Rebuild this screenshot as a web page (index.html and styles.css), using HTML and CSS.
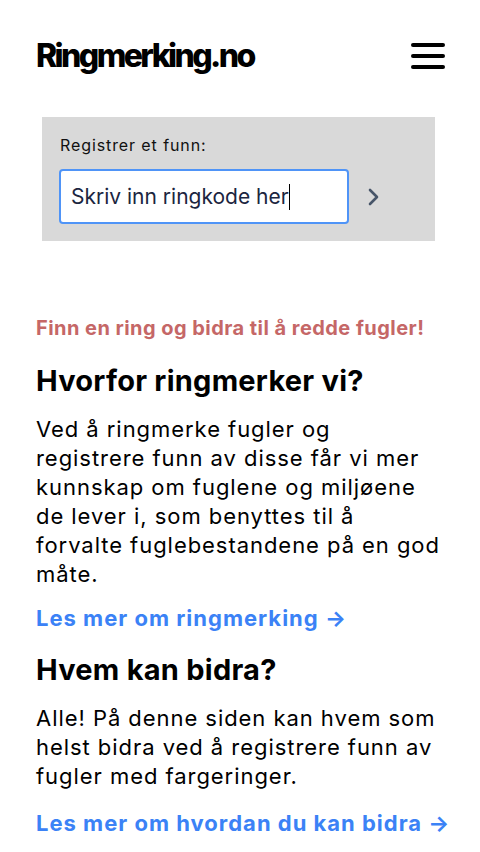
FILE: index.html
```html
<!DOCTYPE html>
<html lang="no">
<head>
<meta charset="utf-8">
<title>Ringmerking.no</title>
<link rel="stylesheet" href="styles.css">
</head>
<body>
<header class="header">
  <div class="logo">Ringmerking.no</div>
  <button class="menu" aria-label="Meny">
    <svg width="34" height="28" viewBox="0 0 34 28"><g stroke="#000" stroke-width="4" stroke-linecap="round"><line x1="2" y1="3" x2="32" y2="3"/><line x1="2" y1="14" x2="32" y2="14"/><line x1="2" y1="25" x2="32" y2="25"/></g></svg>
  </button>
</header>
<main class="main">
  <section class="register">
    <label class="register-label" for="ring">Registrer et funn:</label>
    <div class="register-row">
      <div class="input">Skriv inn ringkode her<span class="caret"></span></div>
      <svg class="chev" width="12" height="18" viewBox="0 0 12 18"><polyline points="2,2 9,9 2,16" fill="none" stroke="#475569" stroke-width="2.6" stroke-linecap="round" stroke-linejoin="round"/></svg>
    </div>
  </section>
  <p class="tagline">Finn en ring og bidra til å redde fugler!</p>
  <h2 class="h2">Hvorfor ringmerker vi?</h2>
  <p class="para">Ved å ringmerke fugler og registrere funn av disse får vi mer kunnskap om fuglene og miljøene de lever i, som benyttes til å forvalte fuglebestandene på en god måte.</p>
  <a class="link" href="#">Les mer om ringmerking →</a>
  <h2 class="h2 h2-second">Hvem kan bidra?</h2>
  <p class="para">Alle! På denne siden kan hvem som helst bidra ved å registrere funn av fugler med fargeringer.</p>
  <a class="link link-last" href="#">Les mer om hvordan du kan bidra →</a>
</main>
</body>
</html>
```
FILE: styles.css
```css
* { box-sizing: border-box; }
html, body { margin: 0; padding: 0; background: #fff; }
body { font-family: Inter, "Noto Sans", sans-serif; color: #000; }

.header {
  display: flex;
  justify-content: space-between;
  align-items: center;
  padding: 36px 36px 0 36px;
  height: 76px;
}
.logo {
  font-size: 32px;
  font-weight: 800;
  letter-spacing: -2.6px;
  line-height: 40px;
}
.menu {
  border: 0;
  background: none;
  padding: 0;
  margin-right: -1px;
  display: flex;
}

.main { padding: 41px 36px 0 36px; }

.register {
  background: #d9d9d9;
  margin: 0 9px 0 6px;
  height: 124px;
  padding: 18px 17px 0 18px;
}
.register-label {
  display: block;
  font-size: 16px;
  letter-spacing: 0.9px;
  line-height: 20px;
  color: #111;
  margin-bottom: 14px;
}
.register-row {
  display: flex;
  align-items: center;
  gap: 19px;
}
.input {
  width: 290px;
  height: 55px;
  margin-left: -1px;
  border: 2px solid #4f94f7;
  border-radius: 4px;
  background: #fff;
  font-size: 21px;
  color: #1b2540;
  padding: 0 10px;
  display: flex;
  align-items: center;
}
.caret {
  display: inline-block;
  width: 1.5px;
  height: 26px;
  background: #000;
  margin-left: 0;
}

.tagline {
  margin: 75px 0 0 0;
  color: #c56767;
  font-weight: 700;
  font-size: 20px;
  letter-spacing: 0.45px;
  line-height: 24px;
}
.h2 {
  margin: 23px 0 0 0;
  font-size: 29px;
  font-weight: 700;
  letter-spacing: 0.25px;
  line-height: 36px;
}
.h2-second { margin-top: 18px; }
.para {
  margin: 16px 0 0 0;
  font-size: 22px;
  letter-spacing: 0.95px;
  line-height: 29px;
}
.link {
  display: block;
  margin-top: 13px;
  font-size: 22px;
  font-weight: 700;
  letter-spacing: 1px;
  line-height: 32px;
  color: #3b82f6;
  text-decoration: none;
  white-space: nowrap;
}
.link-last { margin-top: 16px; }
```
